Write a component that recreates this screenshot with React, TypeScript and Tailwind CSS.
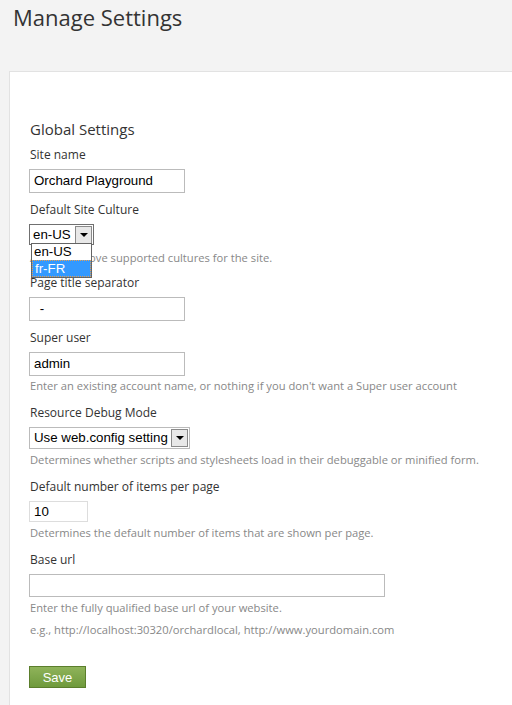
const font = { fontFamily: '"Open Sans", "Noto Sans", sans-serif' };
const arial = { fontFamily: '"Liberation Sans", Arial, sans-serif' };

function Label({ children, className = '' }: { children: React.ReactNode; className?: string }) {
  return <div className={`text-[12px] leading-[18px] text-[#333] pl-[1px] ${className}`}>{children}</div>;
}

function Hint({ children, className = '' }: { children: React.ReactNode; className?: string }) {
  return <div className={`text-[11.2px] leading-[16px] text-[#888] whitespace-nowrap pl-[1px] ${className}`}>{children}</div>;
}

function TextBox({ value, w, h = 'h-[24px]', className = '' }: { value: string; w: string; h?: string; className?: string }) {
  return (
    <div
      className={`${w} ${h} border border-[#bbb] bg-white flex items-center px-[4px] text-[13.3px] text-black whitespace-pre ${className}`}
      style={arial}
    >
      {value}
    </div>
  );
}

function Arrow() {
  return (
    <div className="w-[17px] h-[18px] border border-[#8a8a8a] bg-[#e8e8e8] flex items-center justify-center shrink-0">
      <div className="w-0 h-0 border-l-[4px] border-r-[4px] border-t-[4px] border-l-transparent border-r-transparent border-t-black" />
    </div>
  );
}

export default function App() {
  return (
    <div className="min-h-screen bg-[#f3f3f3] overflow-hidden" style={font}>
      <h1 className="text-[22px] leading-[32px] text-[#333] pl-[13px] pt-[1px]">Manage Settings</h1>

      <div className="ml-[9px] mt-[38px] bg-white border-l border-t border-[#e2e2e2] pl-[19px] pt-[47px] pb-[40px] min-h-[640px]">
        <h2 className="text-[15px] leading-[20px] text-[#333] pl-[1px]">Global Settings</h2>

        <Label className="mt-[7px]">Site name</Label>
        <TextBox value="Orchard Playground" w="w-[156px]" className="mt-[5px]" />

        <Label className="mt-[8px]">Default Site Culture</Label>
        <div className="relative mt-[5px]">
          <div
            className="w-[65px] h-[21px] border border-[#707070] bg-white flex items-center justify-between pl-[3px] pr-[1px] text-[13.3px] text-black"
            style={arial}
          >
            en-US
            <Arrow />
          </div>
          <div
            className="absolute left-[2px] top-[19px] w-[61px] bg-white border border-[#646464] text-[13.3px] leading-[16px] z-10"
            style={arial}
          >
            <div className="px-[2px] h-[16px] text-black">en-US</div>
            <div className="px-[2px] h-[17px] bg-[#3399ff] text-white border border-dotted border-[#e8a050]">fr-FR</div>
          </div>
          <Hint className="mt-[5px]">Add or remove supported cultures for the site.</Hint>
        </div>

        <Label className="mt-[8px]">Page title separator</Label>
        <TextBox value=" - " w="w-[156px]" className="mt-[5px] pl-[6px]" />

        <Label className="mt-[8px]">Super user</Label>
        <TextBox value="admin" w="w-[156px]" className="mt-[5px]" />
        <Hint className="mt-[2px]">Enter an existing account name, or nothing if you don't want a Super user account</Hint>

        <Label className="mt-[10px]">Resource Debug Mode</Label>
        <div
          className="mt-[5px] w-[161px] h-[22px] border border-[#bbb] bg-white flex items-center justify-between pl-[4px] pr-[1px] text-[13.3px] text-black whitespace-nowrap"
          style={arial}
        >
          Use web.config setting
          <Arrow />
        </div>
        <Hint className="mt-[3px]">Determines whether scripts and stylesheets load in their debuggable or minified form.</Hint>

        <Label className="mt-[10px]">Default number of items per page</Label>
        <TextBox value="10" w="w-[59px]" h="h-[21px]" className="mt-[5px] border-[#ddd]" />
        <Hint className="mt-[3px]">Determines the default number of items that are shown per page.</Hint>

        <Label className="mt-[10px]">Base url</Label>
        <TextBox value="" w="w-[356px]" h="h-[23px]" className="mt-[5px]" />
        <Hint className="mt-[3px]">Enter the fully qualified base url of your website.</Hint>
        <Hint className="mt-[6px]">e.g., http://localhost:30320/orchardlocal, http://www.yourdomain.com</Hint>

        <button
          className="mt-[28px] w-[57px] h-[22px] border border-[#5b7e2c] bg-gradient-to-b from-[#8fb35a] to-[#6f9a3c] text-white text-[13px] leading-[19px]"
          style={arial}
        >
          Save
        </button>
      </div>
    </div>
  );
}
